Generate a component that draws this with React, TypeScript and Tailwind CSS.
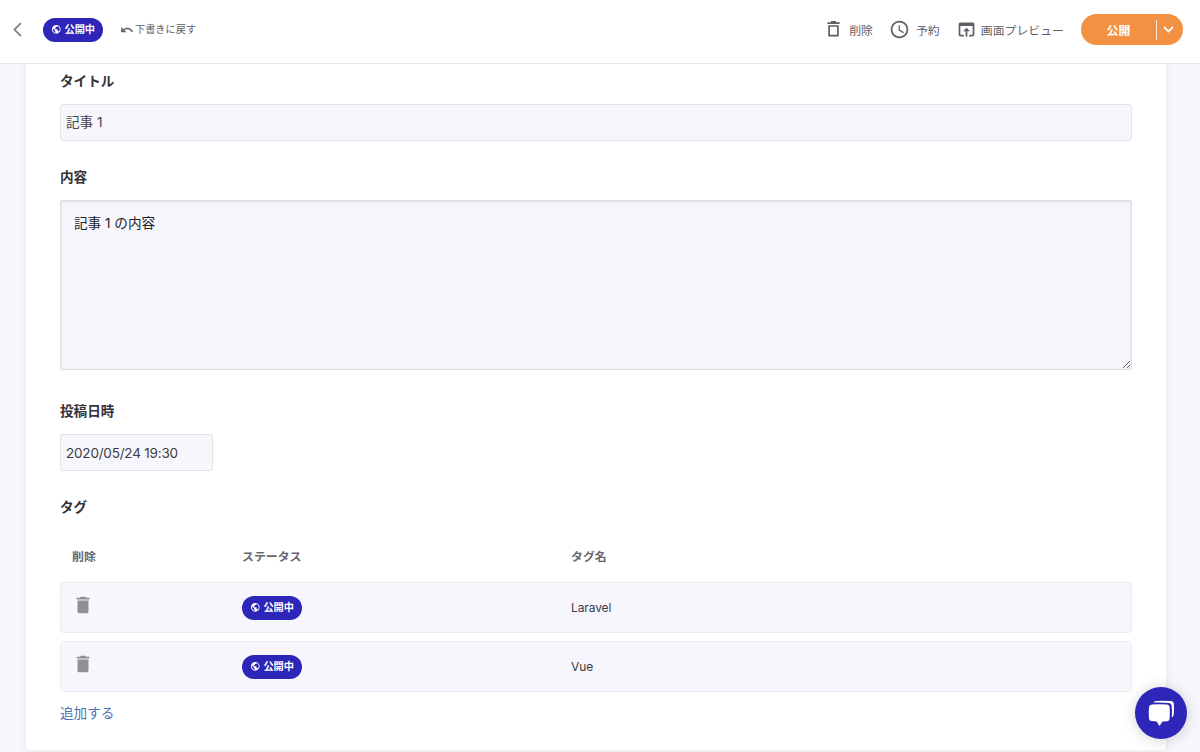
import React, { useState } from 'react';
import { MdAccessTime, MdDelete, MdOpenInBrowser, MdPublic, MdUndo } from 'react-icons/md';

interface Tag {
  id: number;
  name: string;
}

const initialTags: Tag[] = [
  { id: 1, name: 'Laravel' },
  { id: 2, name: 'Vue' },
];

const StatusBadge: React.FC = () => (
  <span className="inline-flex h-6 w-[60px] shrink-0 items-center rounded-full bg-[#2d26b8] pl-2 text-[10.2px] font-bold text-white">
    <MdPublic className="mr-[3px] h-[10.5px] w-[10.5px]" />
    <span className="whitespace-nowrap leading-none">公開中</span>
  </span>
);

const FieldLabel: React.FC<{ children: React.ReactNode }> = ({ children }) => (
  <label className="block h-5 text-[13.6px] font-bold leading-5 text-[#333338]">{children}</label>
);

const Header: React.FC = () => (
  <header className="relative z-10 flex h-16 shrink-0 items-center border-b border-[#e6e6e8] bg-white pb-1 text-[#5f5f69]">
    <button className="ml-3 mr-[18px] flex w-[13px] items-center">
      <svg className="h-[15px] w-[13px]" viewBox="0 0 13 15" fill="none" stroke="#85858d" strokeWidth="1.8">
        <path d="M8.9 1.2 2.4 7.6l6.5 6.4" />
      </svg>
    </button>
    <StatusBadge />
    <button className="ml-[17px] flex items-center gap-px pt-px text-[10.2px]">
      <MdUndo className="h-[14px] w-[14px]" />
      <span className="whitespace-nowrap">下書きに戻す</span>
    </button>

    <div className="ml-auto flex items-center text-[11.9px]">
      <button className="flex items-center gap-[9px]">
        <svg className="h-4 w-[13px]" viewBox="0 0 13 16" fill="none" stroke="currentColor" strokeWidth="1.7">
          <path d="M.4 2.1h12.2M4 .9h5" />
          <path d="M2.1 5h8.8v9.6H2.1z" />
        </svg>
        <span className="pt-0.5">削除</span>
      </button>
      <button className="ml-4 flex items-center gap-1.5">
        <MdAccessTime className="h-[21px] w-[21px]" />
        <span className="pt-0.5">予約</span>
      </button>
      <button className="ml-4 flex items-center gap-1">
        <MdOpenInBrowser className="h-[21px] w-[21px]" />
        <span className="whitespace-nowrap pt-0.5">画面プレビュー</span>
      </button>
      <div className="ml-[17px] mr-[17px] flex h-[31px] w-[102px] items-center rounded-full bg-[#f29141] text-white">
        <button className="w-[75px] pt-0.5 text-center font-bold">公開</button>
        <span className="h-5 w-px bg-white/80" />
        <button className="flex flex-1 justify-center pr-[3px]">
          <svg className="h-[7px] w-[11px]" viewBox="0 0 11 7" fill="none" stroke="currentColor" strokeWidth="1.8">
            <path d="M1 1l4.5 4.5L10 1" />
          </svg>
        </button>
      </div>
    </div>
  </header>
);

export default function App() {
  const [title, setTitle] = useState('記事 1');
  const [body, setBody] = useState('記事 1 の内容');
  const [tags] = useState<Tag[]>(initialTags);

  return (
    <div className="flex h-[752px] flex-col overflow-hidden bg-[#f7f6fd] font-['Inter','Noto_Sans_CJK_JP',sans-serif]">
      <Header />

      <main className="ml-[26px] h-[686px] w-[1140px] bg-white px-[34px] pt-[7px] shadow-[0_0_8px_rgba(0,0,0,0.07)]">
        {/* Title */}
        <FieldLabel>タイトル</FieldLabel>
        <input
          value={title}
          onChange={(e) => setTitle(e.target.value)}
          className="mt-[13px] block h-[37px] w-full rounded-[3px] border border-[#e3e3e7] bg-[#f7f6fd] px-[5px] pb-[3px] text-[13.6px] text-[#45454c] outline-none"
        />

        {/* Body */}
        <div className="mt-[26px]">
          <FieldLabel>内容</FieldLabel>
          <textarea
            value={body}
            onChange={(e) => setBody(e.target.value)}
            className="mt-[13px] block h-[170px] w-full rounded-[2px] border border-[#dfdfe3] bg-[#f7f6fd] px-[13px] py-3 text-[13.6px] leading-5 text-[#222226] shadow-[inset_0_1px_3px_rgba(0,0,0,0.1)] outline-none"
          />
        </div>

        {/* Published date */}
        <div className="mt-[31px]">
          <FieldLabel>投稿日時</FieldLabel>
          <input
            defaultValue="2020/05/24 19:30"
            className="mt-[13px] block h-[37px] w-[153px] rounded-[3px] border border-[#e3e3e7] bg-[#f7f6fd] px-[5px] text-[13.5px] tracking-[-0.2px] text-[#3c3c42] outline-none"
          />
        </div>

        {/* Tags */}
        <div className="mt-[26px]">
          <FieldLabel>タグ</FieldLabel>
          <div className="mt-[30px] grid h-5 grid-cols-[170px_329px_1fr] pl-3 text-[11.9px] font-bold leading-5 text-[#66666f]">
            <span>削除</span>
            <span>ステータス</span>
            <span>タグ名</span>
          </div>
          <div className="mt-[15px] flex flex-col gap-2">
            {tags.map((tag) => (
              <div
                key={tag.id}
                className="grid h-[51px] grid-cols-[170px_329px_1fr] items-center rounded-[4px] border border-[#ebebef] bg-[#f7f6fd] pl-[11px] text-[12px] tracking-[-0.1px] text-[#3a3a40]"
              >
                <button className="-mt-1.5 text-[#8f8f98]">
                  <MdDelete className="h-[22px] w-[22px]" />
                </button>
                <StatusBadge />
                <span>{tag.name}</span>
              </div>
            ))}
          </div>
          <button className="mt-[11px] block h-5 text-[13.6px] leading-5 text-[#4a72b4]">追加する</button>
        </div>
      </main>

      {/* Chat launcher */}
      <button className="fixed bottom-[13px] right-[13px] z-20 flex h-[52px] w-[52px] items-center justify-center rounded-full bg-[#2d26b8] shadow-[0_1px_14px_rgba(0,0,0,0.18)]">
        <svg className="h-[26px] w-7" viewBox="0 0 28 26" fill="#fff">
          <path d="M5 4.5Q12 3.8 20 4.5 22.4 4.7 22.6 7 23.1 13.5 22.6 19 22.4 21 20.4 21.2L15.5 21.5 12.8 25.4Q12.2 25.9 11.8 25.2L9.8 21.5 4.6 21.1Q2.2 21 2 18.7 1.4 13 2 7.3 2.2 4.8 5 4.5Z" />
          <path d="M6.3 2.6Q7 1.2 9 1 16 .4 24.4 1.1 26.5 1.3 26.8 3.5 27.3 9.3 26.7 14.7 26.4 16.8 24.8 17.4 25.4 11 24.6 5.5 24.2 3.3 21.8 3 14 2.2 6.3 2.6Z" />
        </svg>
      </button>
    </div>
  );
}
